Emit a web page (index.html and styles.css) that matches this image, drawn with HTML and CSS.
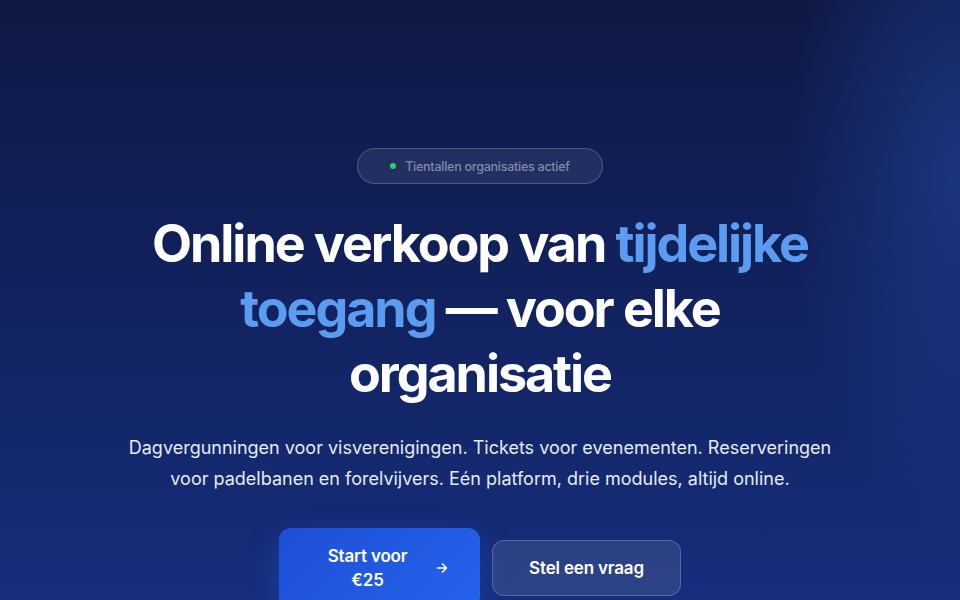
FILE: index.html
```html
<!DOCTYPE html>
<html lang="nl">
<head>
<meta charset="utf-8">
<title>Tijdelijke toegang</title>
<link rel="stylesheet" href="styles.css">
</head>
<body>
<main class="hero">
  <div class="badge"><span class="dot"></span><span>Tientallen organisaties actief</span></div>
  <h1 class="title"><span class="line">Online verkoop van <span class="accent">tijdelijke</span></span> <span class="line"><span class="accent">toegang</span> — voor elke</span> <span class="line">organisatie</span></h1>
  <p class="lead">Dagvergunningen voor visverenigingen. Tickets voor evenementen. Reserveringen voor padelbanen en forelvijvers. Eén platform, drie modules, altijd online.</p>
  <div class="actions">
    <a class="btn btn-primary" href="#"><span class="btn-text">Start voor €25</span><svg class="arrow" width="14" height="14" viewBox="0 0 14 14" fill="none" stroke="currentColor" stroke-width="1.6" stroke-linecap="round" stroke-linejoin="round"><path d="M2.5 7h9M7.5 3l4 4-4 4"/></svg></a>
    <a class="btn btn-secondary" href="#">Stel een vraag</a>
  </div>
</main>
</body>
</html>
```

FILE: styles.css
```css
* { box-sizing: border-box; }
html, body { margin: 0; height: 100%; }
body {
  font-family: "Inter", "Liberation Sans", sans-serif;
  color: #fff;
  background:
    radial-gradient(ellipse 170px 380px at 100% 28%, rgba(40, 80, 180, 0.45), rgba(40, 80, 180, 0) 100%),
    linear-gradient(180deg, #0f1945 0%, #11215c 45%, #162e7c 100%);
  overflow: hidden;
}
.hero {
  display: flex;
  flex-direction: column;
  align-items: center;
  text-align: center;
  padding-top: 148px;
}
.badge {
  display: inline-flex;
  align-items: center;
  gap: 9px;
  height: 36px;
  padding: 0 32px;
  border-radius: 999px;
  background: rgba(255, 255, 255, 0.08);
  border: 1px solid rgba(255, 255, 255, 0.2);
  color: #7f89ae;
  font-size: 12.5px;
  font-weight: 500;
  letter-spacing: -0.02em;
}
.dot {
  width: 6px;
  height: 6px;
  border-radius: 50%;
  background: #22d36b;
}
.title {
  margin: 27px 0 0;
  max-width: 700px;
  font-size: 52px;
  line-height: 65px;
  font-weight: 700;
  letter-spacing: -0.04em;
}
.line { display: block; }
.accent { color: #5b9cf0; }
.lead {
  margin: 26px 0 0;
  max-width: 710px;
  font-size: 18px;
  line-height: 31px;
  color: #e6ebf7;
}
.actions {
  display: flex;
  align-items: center;
  gap: 12px;
  margin-top: 34px;
}
.btn {
  display: inline-flex;
  align-items: center;
  justify-content: center;
  text-decoration: none;
  color: #fff;
  font-size: 17px;
  font-weight: 600;
  line-height: 24px;
  border-radius: 12px;
  letter-spacing: -0.01em;
}
.btn-primary {
  width: 201px;
  padding: 16px 32px;
  gap: 10px;
  background: linear-gradient(135deg, #1e4fd6 0%, #2563eb 100%);
  box-shadow: 0 10px 30px rgba(37, 99, 235, 0.35);
}
.btn-text { max-width: 114px; flex: 0 0 114px; }
.arrow { flex: none; }
.btn-secondary {
  width: 189px;
  height: 56px;
  padding: 0 24px;
  background: rgba(255, 255, 255, 0.1);
  border: 1px solid rgba(255, 255, 255, 0.2);
}
```
